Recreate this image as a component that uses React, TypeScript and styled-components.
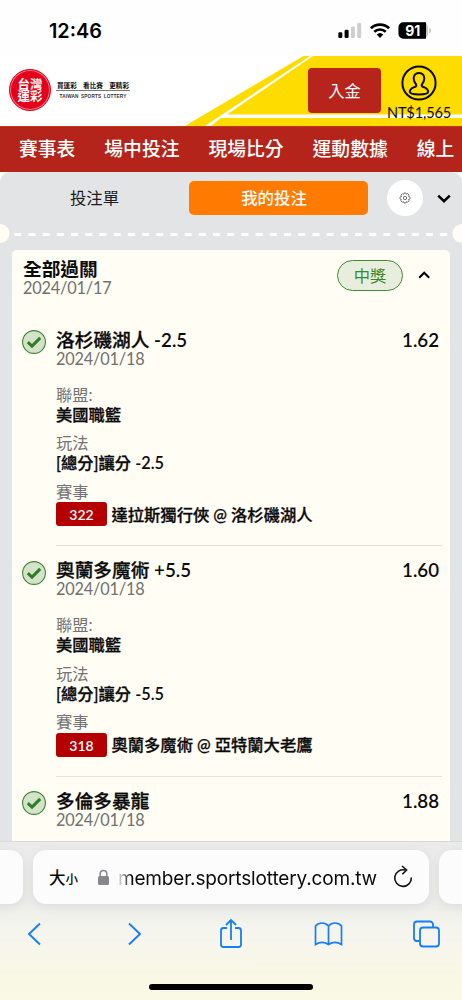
import React from "react";
import styled, { createGlobalStyle } from "styled-components";

const GlobalStyle = createGlobalStyle`
  * { box-sizing: border-box; }
  body { margin: 0; background: #fffdf4; }
`;

const cjk = `"Noto Sans CJK TC", sans-serif`;

const Screen = styled.div`
  width: 462px;
  height: 1000px;
  display: flex;
  flex-direction: column;
  overflow: hidden;
  background: #fffdf4;
  color: #0b0b0b;
  font-family: Lato, ${cjk};
  white-space: nowrap;
`;

const StatusBar = styled.header`
  height: 56px;
  flex: none;
  display: flex;
  align-items: flex-start;
  justify-content: space-between;
  padding: 21px 30.5px 0 49px;
  background: #fefefe;
`;

const Clock = styled.time`
  font: 600 19.8px/20px Inter, sans-serif;
  color: #000;
`;

const StatusIcons = styled.svg`
  display: block;
  width: 94px;
  height: 20px;
`;

const Banner = styled.div`
  height: 70px;
  flex: none;
  position: relative;
  display: flex;
  background: #fff;
`;

const BannerArt = styled.svg`
  position: absolute;
  inset: 0;
`;

const Brand = styled.div`
  width: 308px;
  display: flex;
  align-items: flex-start;
  padding: 13px 0 0 9px;
  gap: 5px;
`;

const Seal = styled.div`
  width: 42px;
  height: 42px;
  border-radius: 50%;
  background: #e5001b;
  border: 1px solid #e5001b;
  box-shadow: inset 0 0 0 1px #f2808c;
  display: grid;
  grid-template-columns: 12.5px 12.5px;
  grid-auto-rows: 12.5px;
  place-content: center;
  color: #fff;
  font: 700 12.5px/12px ${cjk};
`;

const Slogan = styled.div`
  width: 74px;
  margin-top: 12px;
  display: flex;
  flex-direction: column;
  align-items: center;
`;

const SloganMain = styled.div`
  width: 100%;
  height: 10px;
  padding: 0 1px;
  display: flex;
  justify-content: space-between;
  border-bottom: 1px solid #777;
  font: 700 6.6px/8px ${cjk};
`;

const SloganSub = styled.div`
  margin-top: 2px;
  font: 700 4.7px/7px "Liberation Sans", sans-serif;
  letter-spacing: 0.15px;
  word-spacing: 1px;
  color: #333;
`;

const Deposit = styled.button`
  position: relative;
  width: 73px;
  height: 45px;
  margin: 12px 6px 0 0;
  padding: 0 0 1px;
  border: 0;
  border-radius: 4px;
  background: #b7241b;
  color: #fff;
  font: 400 16.3px/20px ${cjk};
`;

const Account = styled.div`
  position: relative;
  width: 64px;
  display: flex;
  flex-direction: column;
  align-items: center;
  padding-top: 9px;
  font-size: 14.6px;
  line-height: 17px;
  letter-spacing: -0.15px;
`;

const AvatarIcon = styled.svg`
  display: block;
  width: 36px;
  height: 36px;
  margin-bottom: 3px;
  flex: none;
`;

const Nav = styled.nav`
  height: 46px;
  flex: none;
  display: flex;
  align-items: center;
  gap: 29px;
  padding: 0 0 3px 19px;
  border-top: 1px solid #c03a18;
  background: #b5241b;
  color: #fff;
  font: 500 18.8px/26px ${cjk};
`;

const Slip = styled.main`
  height: 669px;
  flex: none;
  overflow: hidden;
  border-radius: 10px 10px 0 0;
  background: #e3e4e6;
`;

const Tabs = styled.div`
  height: 52px;
  display: flex;
  align-items: center;
`;

const Tab = styled.div<{ $active?: boolean }>`
  width: ${(p) => (p.$active ? 179 : 189)}px;
  height: 34px;
  display: flex;
  align-items: center;
  justify-content: center;
  padding: 0 ${(p) => (p.$active ? 9 : 0)}px 2px 0;
  border-radius: 5px;
  background: ${(p) => (p.$active ? "#ff7a00" : "transparent")};
  color: ${(p) => (p.$active ? "#fff" : "#1c1c1c")};
  font: ${(p) => (p.$active ? 500 : 400)} 16.4px/24px ${cjk};
`;

const GearButton = styled.div`
  width: 36px;
  height: 36px;
  margin-left: 19px;
  border-radius: 50%;
  background: #fff;
  display: flex;
  align-items: center;
  justify-content: center;
`;

const Chevron = styled.svg<{ $left: number }>`
  display: block;
  margin-left: ${(p) => p.$left}px;
`;

const Perforation = styled.svg`
  display: block;
  width: 462px;
  height: 20px;
`;

const Card = styled.section`
  margin: 6px 12px 0;
  height: 591px;
  border-radius: 5px 5px 0 0;
  background: #fffdf4;
  overflow: hidden;
`;

const GroupHeader = styled.div`
  height: 64.5px;
  display: flex;
  align-items: flex-start;
  padding: 9px 20px 0 11px;
`;

const Heading = styled.div`
  flex: 1;
`;

const Title = styled.div<{ $heavy?: boolean }>`
  height: 20px;
  font-size: 18.7px;
  line-height: 20px;
  font-weight: ${(p) => (p.$heavy ? 700 : 500)};
  -webkit-text-stroke: ${(p) => (p.$heavy ? 0 : 0.3)}px currentColor;
`;

const Latin = styled.span`
  font-family: Lato, sans-serif;
  font-weight: 600;
  -webkit-text-stroke: 0;
`;

const DateText = styled.div`
  height: 19px;
  font-size: 16.3px;
  line-height: 18px;
  letter-spacing: -0.18px;
  color: #717171;
`;

const WinPill = styled.span`
  width: 66px;
  height: 31px;
  margin-top: 1px;
  display: flex;
  align-items: center;
  justify-content: center;
  padding-bottom: 1px;
  border: 1.3px solid #3f8a33;
  border-radius: 16px;
  background: #e8eedd;
  color: #3a872d;
  font: 400 16.3px/22px ${cjk};
`;

const Bet = styled.article`
  height: 230.7px;
  display: flex;
  padding-left: 10px;
`;

const ResultIcon = styled.svg`
  flex: none;
  width: 24px;
  height: 24px;
  margin: 15.5px 10px 0 0;
`;

const BetBody = styled.div<{ $ruled?: boolean }>`
  flex: 1;
  margin-right: 8px;
  padding: 14px 3px 0 0;
  border-top: 1px solid ${(p) => (p.$ruled ? "#e4e3dc" : "transparent")};
`;

const BetHead = styled.div`
  display: flex;
  justify-content: space-between;
`;

const Field = styled.dl<{ $first?: boolean }>`
  margin: ${(p) => (p.$first ? 16 : 8.5)}px 0 0;
  font-size: 16.3px;
  line-height: 20px;
`;

const Label = styled.dt`
  height: 20px;
  color: #747474;
`;

const Value = styled.dd`
  height: 20px;
  margin: 0;
  display: flex;
  align-items: center;
  font-weight: 500;
  white-space: pre;
  -webkit-text-stroke: 0.3px currentColor;
`;

const MatchNumber = styled.span`
  width: 51px;
  height: 24px;
  margin: 5px 4.5px 0 0;
  border-radius: 3px;
  background: #b40000;
  color: #fff;
  font-size: 14px;
  font-weight: 600;
  line-height: 25px;
  text-align: center;
  -webkit-text-stroke: 0;
`;

const MatchName = styled.span`
  margin-top: 6px;
`;

const Browser = styled.footer`
  height: 159px;
  flex: none;
  border-top: 1px solid #d9d9d8;
  background: linear-gradient(#ebebeb 0%, #ebebea 36%, #f5f5ee 56%, #f9f8e5 90%, #faf9e4 100%);
`;

const AddressRow = styled.div`
  display: flex;
  gap: 10px;
  padding-top: 8px;
  margin: 0 -20px;
`;

const AddressTab = styled.div<{ $current?: boolean }>`
  width: ${(p) => (p.$current ? 396 : 43)}px;
  height: 54px;
  flex: none;
  display: flex;
  align-items: center;
  padding-left: 16px;
  border-radius: 13px;
  background: #fcfcfc;
  box-shadow: 0 3px 12px rgba(0, 0, 0, 0.07);
`;

const TextSize = styled.span<{ $small?: boolean }>`
  font: 500 ${(p) => (p.$small ? 12.5 : 16.5)}px/22px ${cjk};
  padding-top: ${(p) => (p.$small ? 3 : 0)}px;
`;

const LockIcon = styled.svg`
  margin: 0 7px 0 19px;
  flex: none;
`;

const Url = styled.div`
  width: 260px;
  display: flex;
  justify-content: flex-end;
  overflow: hidden;
  padding-top: 3px;
  font: 400 19px/26px Inter, sans-serif;
  letter-spacing: -0.15px;
  mask-image: linear-gradient(90deg, transparent 0, #000 14px);
`;

const Toolbar = styled.svg`
  display: block;
  width: 462px;
  height: 60px;
`;

const HomeIndicator = styled.div`
  width: 164px;
  height: 6px;
  margin: 20px auto 0 149px;
  border-radius: 3px;
  background: #000;
`;

type BetData = {
  team: string;
  handicap?: string;
  odds: string;
  line?: string;
  number?: string;
  match?: string;
};

const bets: BetData[] = [
  { team: "洛杉磯湖人", handicap: " -2.5", odds: "1.62", line: " -2.5", number: "322", match: "達拉斯獨行俠 @ 洛杉磯湖人" },
  { team: "奧蘭多魔術", handicap: " +5.5", odds: "1.60", line: " -5.5", number: "318", match: "奧蘭多魔術 @ 亞特蘭大老鷹" },
  { team: "多倫多暴龍", odds: "1.88" },
];

const navItems = ["賽事表", "場中投注", "現場比分", "運動數據", "線上"];

function BetItem({ bet, ruled }: { bet: BetData; ruled: boolean }) {
  return (
    <Bet>
      <ResultIcon viewBox="0 0 24 24">
        <circle cx="12" cy="12" r="11.4" fill="#d3e2c8" stroke="#3c8630" strokeWidth="1.1" />
        <path d="M5.800 12.200l4.200 3.900 8.200-8.200" fill="none" stroke="#2f7d24" strokeWidth="3" />
      </ResultIcon>
      <BetBody $ruled={ruled}>
        <BetHead>
          <Title>
            {bet.team}
            <Latin>{bet.handicap}</Latin>
          </Title>
          <Title>
            <Latin>{bet.odds}</Latin>
          </Title>
        </BetHead>
        <DateText>2024/01/18</DateText>
        {bet.line && (
          <>
            <Field $first>
              <Label>聯盟:</Label>
              <Value>美國職籃</Value>
            </Field>
            <Field>
              <Label>玩法</Label>
              <Value>
                [總分]讓分<Latin>{bet.line}</Latin>
              </Value>
            </Field>
            <Field>
              <Label>賽事</Label>
              <Value>
                <MatchNumber>{bet.number}</MatchNumber>
                <MatchName>{bet.match}</MatchName>
              </Value>
            </Field>
          </>
        )}
      </BetBody>
    </Bet>
  );
}

export default function App() {
  return (
    <Screen>
      <GlobalStyle />
      <StatusBar>
        <Clock>12:46</Clock>
        <StatusIcons viewBox="0 0 94 20">
          <g fill="#000">
            <rect x="0.3" y="11.3" width="4" height="5.7" rx="1.2" />
            <rect x="6.6" y="8.8" width="4" height="8.2" rx="1.2" />
            <g fill="#cfcfcf">
              <rect x="12.9" y="5.5" width="4" height="11.5" rx="1.2" />
              <rect x="19.2" y="2" width="4" height="15" rx="1.2" />
            </g>
          </g>
          <g fill="none" stroke="#000" strokeWidth="2.7">
            <path d="M32.9 7.2a13.2 13.2 0 0 1 18.2 0" />
            <path d="M36.3 10.8a8.2 8.2 0 0 1 11.4 0" />
          </g>
          <path d="M38.7 13.5a4.900 4.900 0 0 1 6.600 0L42 17z" />
          <rect x="60.5" y="1.200" width="29.500" height="16.600" rx="5" fill="#c4c4c4" />
          <path d="M65.500 1.200H88V17.800H65.500a5 5 0 0 1-5-5V6.200a5 5 0 0 1 5-5z" />
          <path d="M91.200 6.800q2 .9 2 2.900t-2 2.900z" fill="#c4c4c4" />
          <text x="74.800" y="14.600" fill="#fff" textAnchor="middle" fontFamily="Inter, sans-serif" fontWeight="700" fontSize="14">91</text>
        </StatusIcons>
      </StatusBar>

      <Banner>
        <BannerArt width="462" height="70" viewBox="0 0 462 70">
          <path d="M303.500 0H462V70H185z" fill="#ffdc00" />
          <path d="M310 0H313L227 58.500H462V62H221L211 70H205z" fill="#fff" />
        </BannerArt>
        <Brand>
          <Seal>
            <span>台</span>
            <span>灣</span>
            <span>運</span>
            <span>彩</span>
          </Seal>
          <Slogan>
            <SloganMain>
              <span>買運彩</span>
              <span>看比賽</span>
              <span>更精彩</span>
            </SloganMain>
            <SloganSub>TAIWAN SPORTS LOTTERY</SloganSub>
          </Slogan>
        </Brand>
        <Deposit>入金</Deposit>
        <Account>
          <AvatarIcon viewBox="0 0 36 36" fill="none" stroke="#0a0a0a" strokeWidth="2">
            <circle cx="18" cy="18" r="16.600" />
            <path d="M18 8c-3.600 0-5.500 2.400-5.300 5.800.2 3 1.400 4.300 2.300 5.500.7 1.100.2 2-1 2.500-2.600 1.100-5.200 1.800-5.200 5 0 2 4 2.600 9.200 2.600s9.200-.6 9.200-2.600c0-3.200-2.600-3.900-5.200-5-1.200-.5-1.700-1.400-1-2.500.9-1.200 2.100-2.500 2.300-5.500C23.500 10.400 21.600 8 18 8z" />
          </AvatarIcon>
          NT$1,565
        </Account>
      </Banner>

      <Nav>
        {navItems.map((item) => (
          <span key={item}>{item}</span>
        ))}
      </Nav>

      <Slip>
        <Tabs>
          <Tab>投注單</Tab>
          <Tab $active>我的投注</Tab>
          <GearButton>
            <svg width="12" height="12" viewBox="0 0 12 12" fill="none" stroke="#555" strokeWidth=".8">
              <circle cx="6" cy="6" r="1.700" />
              <path d="M5 1h2l.4 1.200 1.200-.6 1.500 1.500-.6 1.200L11 5v2l-1.500.5.6 1.300-1.400 1.400-1.300-.6L7 11H5l-.5-1.400-1.300.6-1.400-1.400.6-1.300L1 7V5l1.500-.5-.6-1.300 1.400-1.400 1.300.5z" />
            </svg>
          </GearButton>
          <Chevron $left={14} width="14" height="9" viewBox="0 0 14 9">
            <path d="M1.200 1.700L7 7.200l5.800-5.500" fill="none" stroke="#000" strokeWidth="2.500" />
          </Chevron>
        </Tabs>
        <Perforation viewBox="0 0 462 20">
          <circle cx="0" cy="9.500" r="9.500" fill="#fffdf4" />
          <circle cx="462" cy="9.500" r="9.500" fill="#fffdf4" />
          <path d="M14.200 10.500H448" stroke="#fffdf4" strokeWidth="3" strokeDasharray="7.100 7.100" />
        </Perforation>
        <Card>
          <GroupHeader>
            <Heading>
              <Title $heavy>全部過關</Title>
              <DateText>2024/01/17</DateText>
            </Heading>
            <WinPill>中獎</WinPill>
            <Chevron $left={15} width="12" height="32" viewBox="0 0 12 32">
              <path d="M1.200 18.800L6.200 13.700l5 5.100" fill="none" stroke="#000" strokeWidth="2" />
            </Chevron>
          </GroupHeader>
          {bets.map((bet, i) => (
            <BetItem key={bet.team} bet={bet} ruled={i > 0} />
          ))}
        </Card>
      </Slip>

      <Browser>
        <AddressRow>
          <AddressTab />
          <AddressTab $current>
            <TextSize>大</TextSize>
            <TextSize $small>小</TextSize>
            <LockIcon width="13" height="17" viewBox="0 0 13 17">
              <rect x="1" y="7" width="11" height="9" rx="1.500" fill="#88888c" />
              <path d="M3.200 8V4.800a3.300 3.300 0 0 1 6.600 0V8" fill="none" stroke="#88888c" strokeWidth="1.500" />
            </LockIcon>
            <Url>member.sportslottery.com.tw</Url>
            <Chevron $left={16} width="20" height="24" viewBox="0 0 20 24" fill="none" stroke="#111" strokeWidth="1.600">
              <path d="M12.300 5.100A8.300 8.300 0 1 0 18.300 12.500" />
              <path d="M9 1l4.600 4-4.300 4.200" />
            </Chevron>
          </AddressTab>
          <AddressTab />
        </AddressRow>
        <Toolbar viewBox="0 0 462 60" fill="none" stroke="#147efb" strokeWidth="1.900">
          <path d="M40 19.500L29 30l11 10.500" />
          <path d="M129 19.500L140 30l-11 10.500" />
          <path d="M227 24h-3.500a2.500 2.500 0 0 0-2.500 2.500v14a2.500 2.500 0 0 0 2.500 2.500h15a2.500 2.500 0 0 0 2.500-2.500v-14a2.500 2.500 0 0 0-2.500-2.500H235M231 36V17M226 21l5-5 5 5" strokeWidth="1.800" />
          <path d="M328.500 40.500c-4-2.500-9-2.500-13 0V22c3.500-4 9.500-4 13 0 3.500-4 9.500-4 13 0V40.500c-4-2.500-9-2.500-13 0zM328.500 22V41" strokeWidth="1.700" />
          <path d="M419.500 37h-2.500a3 3 0 0 1-3-3V20.500a3 3 0 0 1 3-3h13a3 3 0 0 1 3 3V23" strokeWidth="1.800" />
          <rect x="420" y="23.500" width="19" height="19" rx="3" strokeWidth="1.800" />
        </Toolbar>
        <HomeIndicator />
      </Browser>
    </Screen>
  );
}
